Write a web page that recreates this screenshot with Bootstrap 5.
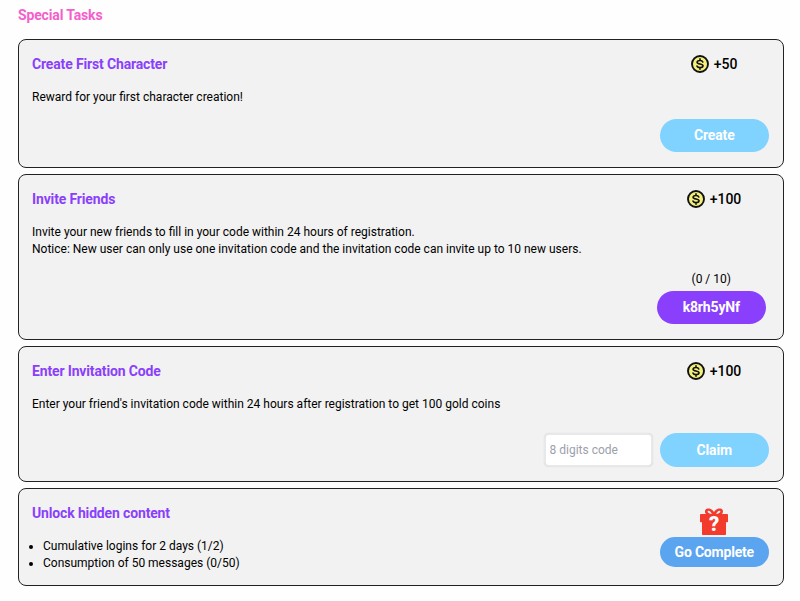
<!doctype html>
<html lang="en"><head><meta charset="utf-8">
<link href="https://cdn.jsdelivr.net/npm/bootstrap@5.3.0/dist/css/bootstrap.min.css" rel="stylesheet">
<style>
html,body{height:100%;overflow:hidden}
body{background:#fefefe;font-family:Roboto,sans-serif;font-size:12px;color:#000;padding:0 16px 0 18px}
.page-title{font-size:14px;letter-spacing:-.15px;font-weight:700;color:#f55fcb;line-height:20px;margin:5px 0 14px;height:20px}
.task-box{background:#f2f2f2;border:1px solid #222;border-radius:8px;padding:14px 14px 15px 13px;margin-bottom:6px}
.task-one{height:129px}.task-two{height:166px}.task-three{height:136px;padding-bottom:14px}.task-four{height:98px;margin-bottom:0}
.task-name{font-size:14px;letter-spacing:-.15px;font-weight:700;color:#8a3ffc;line-height:18px;margin-top:1px}
.task-desc{line-height:17px;margin-top:16px}
.reward-col{width:110px;flex:none}
.reward{font-size:14px;font-weight:500;gap:5px;height:18px;line-height:18px;margin-top:1px}
.coin{width:18px;height:18px;flex:none}
.pill{width:109.500px;height:33.500px;border-radius:17px;border:0;font-size:14px;letter-spacing:-.15px;font-weight:700;color:#fff;padding:0;text-align:center}
.pill-sky{background:#80d2ff}.pill-violet{background:#8a3ffc;margin-right:3px}.pill-blue{background:#5aa4f0;height:30px;letter-spacing:-.2px}
.code-field{width:109px;height:34px;font-size:12px;background:#fff;border:2px solid #e8e8e8;border-radius:5px;padding:0 4px;margin-right:7px;color:#000;font-family:inherit;box-shadow:0 0 1px #ccc}
.code-field::placeholder{color:#9ca0ab;opacity:1}
.tick-list{padding-left:11px;line-height:17px;margin:16px 0 0}
.gift-col{margin-top:5px;gap:1px}
.gift{width:30px;height:28px;display:block}
.count{line-height:16px;margin-right:3px}
</style></head><body>
<div class="page-title">Special Tasks</div>

<div class="task-box task-one d-flex flex-column">
 <div class="d-flex justify-content-between"><div class="task-name">Create First Character</div>
  <div class="reward-col"><div class="reward d-flex align-items-center justify-content-center"><svg class="coin" viewBox="0 0 18 18"><use href="#coin"/></svg>+50</div></div></div>
 <div class="task-desc">Reward for your first character creation!</div>
 <div class="d-flex justify-content-end mt-auto"><button class="pill pill-sky">Create</button></div>
</div>

<div class="task-box task-two d-flex flex-column">
 <div class="d-flex justify-content-between"><div class="task-name">Invite Friends</div>
  <div class="reward-col"><div class="reward d-flex align-items-center justify-content-center"><svg class="coin" viewBox="0 0 18 18"><use href="#coin"/></svg>+100</div></div></div>
 <div class="task-desc">Invite your new friends to fill in your code within 24 hours of registration.<br>Notice: New user can only use one invitation code and the invitation code can invite up to 10 new users.</div>
 <div class="d-flex flex-column align-items-center mt-auto ms-auto"><div class="count">(0 / 10)</div><button class="pill pill-violet mt-1">k8rh5yNf</button></div>
</div>

<div class="task-box task-three d-flex flex-column">
 <div class="d-flex justify-content-between"><div class="task-name">Enter Invitation Code</div>
  <div class="reward-col"><div class="reward d-flex align-items-center justify-content-center"><svg class="coin" viewBox="0 0 18 18"><use href="#coin"/></svg>+100</div></div></div>
 <div class="task-desc">Enter your friend's invitation code within 24 hours after registration to get 100 gold coins</div>
 <div class="d-flex justify-content-end align-items-center mt-auto"><input class="code-field" placeholder="8 digits code"><button class="pill pill-sky">Claim</button></div>
</div>

<div class="task-box task-four d-flex justify-content-between">
 <div><div class="task-name">Unlock hidden content</div>
  <ul class="tick-list"><li>Cumulative logins for 2 days (1/2)</li><li>Consumption of 50 messages (0/50)</li></ul></div>
 <div class="d-flex flex-column align-items-center gift-col">
  <svg class="gift" viewBox="0 0 30 28"><path fill="#f23b2c" fill-rule="evenodd" d="M8.500.5c2.500-.5 5 1 6.500 3.500 1.500-2.500 4-4 6.500-3.500 2.800.6 3.200 3.800 1.500 5.500h5.200c.5 0 .8.300.8.800v6.700c0 .4-.3.700-.7.700H27v11.800c0 .6-.4 1-1 1H4c-.6 0-1-.4-1-1V14.200H1.700c-.4 0-.7-.3-.7-.7V6.800c0-.5.300-.8.800-.8H7C5.300 4.300 5.700 1.100 8.500.5zM9.300 2.800c-1.300.3-1 2.600 3.500 3.200-.7-2-2.300-3.500-3.500-3.200zM20.700 2.800c-1.200-.3-2.800 1.200-3.500 3.200 4.500-.6 4.800-2.900 3.500-3.200z"/><text x="15" y="23" text-anchor="middle" font-family="Roboto,sans-serif" font-weight="900" font-size="20" fill="#fff">?</text></svg>
  <button class="pill pill-blue">Go Complete</button>
 </div>
</div>

<svg width="0" height="0" class="position-absolute"><defs><g id="coin"><circle cx="9" cy="9" r="8" fill="#f3f07e" stroke="#111" stroke-width="1.900"/><path d="M11.800 7c-.3-.9-1.300-1.500-2.800-1.500-1.600 0-2.900.6-2.900 1.800 0 2.500 5.900 1 5.900 3.500 0 1.100-1.300 1.800-3 1.800-1.500 0-2.600-.6-3-1.500M9 3.900v1.600M9 12.600v1.600" fill="none" stroke="#111" stroke-width="1.600" stroke-linecap="round"/></g></defs></svg>
<script src="https://cdn.jsdelivr.net/npm/bootstrap@5.3.0/dist/js/bootstrap.bundle.min.js"></script>
</body></html>
